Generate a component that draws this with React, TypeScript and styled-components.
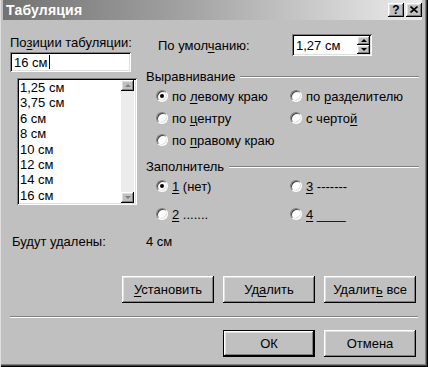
import React from "react";
import styled, { createGlobalStyle, css } from "styled-components";

const Global = createGlobalStyle`
  html, body { margin: 0; padding: 0; background: #c0c0c0; }
  * { box-sizing: border-box; }
  body {
    font-family: "Liberation Sans", Arial, sans-serif;
    font-size: 13px;
    color: #000;
  }
`;

const raised = css`
  background: #c0c0c0;
  box-shadow: inset -1px -1px #000, inset 1px 1px #fff, inset -2px -2px #808080,
    inset 2px 2px #dfdfdf;
`;

const sunken = css`
  background: #fff;
  box-shadow: inset 1px 1px #808080, inset -1px -1px #fff, inset 2px 2px #000,
    inset -2px -2px #dfdfdf;
`;

const Window = styled.div`
  width: 428px;
  height: 367px;
  background: #c0c0c0;
  padding: 0 6px 3px 3px;
  box-shadow: inset 1px 0 #dfdfdf, inset -1px -1px #000, inset -2px -2px #404040,
    inset -3px -3px #808080;
  display: flex;
  flex-direction: column;
`;

const TitleBar = styled.div`
  height: 20px;
  display: flex;
  align-items: center;
  padding: 0 0 0 3px;
  background: linear-gradient(to right, #727272 0%, #a4a4a4 45%, #ececec 100%);
`;

const TitleText = styled.div`
  flex: 1;
  color: #fff;
  font-weight: bold;
  font-size: 14px;
  letter-spacing: 0.2px;
`;

const TitleButtons = styled.div`
  display: flex;
  gap: 2px;
`;

const TitleButton = styled.div`
  ${raised};
  width: 16px;
  height: 14px;
  display: flex;
  align-items: center;
  justify-content: center;
  font-weight: bold;
  font-size: 12px;
  line-height: 1;
  padding-bottom: 1px;
`;

const Body = styled.div`
  display: flex;
  flex-direction: column;
  padding: 13px 3px 0 7px;
`;

const MainGrid = styled.div`
  display: grid;
  grid-template-columns: 136px 1fr;
  row-gap: 9px;
`;

const Column = styled.div`
  display: flex;
  flex-direction: column;
`;

const Label = styled.div<{ $mt?: number; $pl?: number }>`
  line-height: 15px;
  height: 15px;
  white-space: nowrap;
  margin-top: ${(p) => p.$mt ?? 0}px;
  padding-left: ${(p) => p.$pl ?? 0}px;
`;

const U = styled.span`
  text-decoration: underline;
  text-underline-offset: 2px;
`;

const TextInput = styled.div`
  ${sunken};
  margin-top: 2px;
  width: 121px;
  height: 20px;
  display: flex;
  align-items: center;
  padding-left: 4px;
`;

const Caret = styled.span`
  display: inline-block;
  width: 1px;
  height: 14px;
  background: #000;
  margin-left: 1px;
`;

const ListBox = styled.div`
  ${sunken};
  margin: 6px 0 0 7px;
  width: 120px;
  height: 127px;
  display: flex;
  padding: 2px;
`;

const ListItems = styled.div`
  flex: 1;
  overflow: hidden;
  padding-left: 1px;
`;

const ListItem = styled.div`
  height: 15.4px;
  line-height: 15.4px;
  white-space: nowrap;
`;

const ScrollBar = styled.div`
  width: 13px;
  display: flex;
  flex-direction: column;
  background: #ececec;
  margin-right: 1px;
`;

const ScrollTrack = styled.div`
  flex: 1;
`;

const ArrowBtn = styled.div<{ $h: number }>`
  ${raised};
  height: ${(p) => p.$h}px;
  display: flex;
  align-items: center;
  justify-content: center;
`;

const Tri = styled.span<{ $up: boolean; $color: string }>`
  width: 0;
  height: 0;
  border-left: 3px solid transparent;
  border-right: 3px solid transparent;
  ${(p) =>
    p.$up
      ? `border-bottom: 3px solid ${p.$color};`
      : `border-top: 3px solid ${p.$color};`}
`;

const DefaultRow = styled.div`
  display: flex;
  align-items: center;
  height: 22px;
  margin-top: 1px;
`;

const DefaultLabel = styled.div`
  width: 146px;
  padding-left: 12px;
  white-space: nowrap;
`;

const SpinBox = styled.div`
  ${sunken};
  width: 80px;
  height: 22px;
  display: flex;
  align-items: center;
  padding: 2px;
`;

const SpinText = styled.div`
  flex: 1;
  padding-left: 2px;
`;

const SpinButtons = styled.div`
  width: 13px;
  height: 18px;
  display: flex;
  flex-direction: column;
`;

const GroupHeader = styled.div<{ $mt: number }>`
  display: flex;
  align-items: center;
  gap: 5px;
  height: 15px;
  margin-top: ${(p) => p.$mt}px;
`;

const GroupLine = styled.div`
  flex: 1;
  height: 2px;
  border-top: 1px solid #808080;
  border-bottom: 1px solid #fff;
`;

const RadioGrid = styled.div<{ $gap: number }>`
  display: grid;
  grid-template-columns: 134px 1fr;
  grid-auto-rows: 22px;
  row-gap: ${(p) => p.$gap}px;
  padding-left: 10px;
  margin-top: 1px;
`;

const RadioItem = styled.div`
  display: flex;
  align-items: center;
  gap: 4px;
  white-space: nowrap;
`;

const RadioCircle = styled.span<{ $checked?: boolean }>`
  width: 12px;
  height: 12px;
  border-radius: 50%;
  background: #fff;
  border: 1px solid;
  border-color: #808080 #fff #fff #808080;
  box-shadow: inset 1px 1px #404040, inset -1px -1px #dfdfdf;
  display: flex;
  align-items: center;
  justify-content: center;
  &::after {
    content: "";
    width: 4px;
    height: 4px;
    border-radius: 50%;
    background: ${(p) => (p.$checked ? "#000" : "transparent")};
  }
`;

const ButtonRow = styled.div<{ $mt: number }>`
  display: flex;
  justify-content: flex-end;
  gap: 9px;
  padding-right: 3px;
  margin-top: ${(p) => p.$mt}px;
`;

const Button = styled.div<{ $default?: boolean }>`
  ${raised};
  width: 92px;
  height: 27px;
  display: flex;
  align-items: center;
  justify-content: center;
  white-space: nowrap;
  ${(p) =>
    p.$default &&
    css`
      box-shadow: inset 0 0 0 1px #000, inset -2px -2px #000, inset 2px 2px #fff,
        inset -3px -3px #808080, inset 3px 3px #dfdfdf;
    `}
`;

const Separator = styled.div`
  margin-top: 13px;
  margin-right: 1px;
  height: 2px;
  border-top: 1px solid #808080;
  border-bottom: 1px solid #fff;
`;

const Radio = ({ checked, children }: { checked?: boolean; children: React.ReactNode }) => (
  <RadioItem>
    <RadioCircle $checked={checked} />
    <span>{children}</span>
  </RadioItem>
);

const items = ["1,25 см", "3,75 см", "6 см", "8 см", "10 см", "12 см", "14 см", "16 см"];

export default function App() {
  return (
    <>
      <Global />
      <Window>
        <TitleBar>
          <TitleText>Табуляция</TitleText>
          <TitleButtons>
            <TitleButton>?</TitleButton>
            <TitleButton>
              <svg width="8" height="7" viewBox="0 0 8 7">
                <path d="M0.5 0.5 L7.5 6.5 M7.5 0.5 L0.5 6.5" stroke="#000" strokeWidth="1.6" />
              </svg>
            </TitleButton>
          </TitleButtons>
        </TitleBar>
        <Body>
          <MainGrid>
            <Column>
              <Label $mt={2}>
                По<U>з</U>иции табуляции:
              </Label>
              <TextInput>
                16 см<Caret />
              </TextInput>
              <ListBox>
                <ListItems>
                  {items.map((it) => (
                    <ListItem key={it}>{it}</ListItem>
                  ))}
                </ListItems>
                <ScrollBar>
                  <ArrowBtn $h={11}>
                    <Tri $up $color="#808080" />
                  </ArrowBtn>
                  <ScrollTrack />
                  <ArrowBtn $h={11}>
                    <Tri $up={false} $color="#808080" />
                  </ArrowBtn>
                </ScrollBar>
              </ListBox>
            </Column>
            <Column>
              <DefaultRow>
                <DefaultLabel>
                  По умол<U>ч</U>анию:
                </DefaultLabel>
                <SpinBox>
                  <SpinText>1,27 см</SpinText>
                  <SpinButtons>
                    <ArrowBtn $h={9}>
                      <Tri $up $color="#000" />
                    </ArrowBtn>
                    <ArrowBtn $h={9}>
                      <Tri $up={false} $color="#000" />
                    </ArrowBtn>
                  </SpinButtons>
                </SpinBox>
              </DefaultRow>
              <GroupHeader $mt={13}>
                <span>Выравнивание</span>
                <GroupLine />
              </GroupHeader>
              <RadioGrid $gap={0}>
                <Radio checked>
                  по <U>л</U>евому краю
                </Radio>
                <Radio>
                  по <U>р</U>азделителю
                </Radio>
                <Radio>
                  по <U>ц</U>ентру
                </Radio>
                <Radio>
                  с черто<U>й</U>
                </Radio>
                <Radio>
                  по <U>п</U>равому краю
                </Radio>
              </RadioGrid>
              <GroupHeader $mt={8}>
                <span>Заполнитель</span>
                <GroupLine />
              </GroupHeader>
              <RadioGrid $gap={6}>
                <Radio checked>
                  <U>1</U> (нет)
                </Radio>
                <Radio>
                  <U>3</U> -------
                </Radio>
                <Radio>
                  <U>2</U> .......
                </Radio>
                <Radio>
                  <U>4</U> ____
                </Radio>
              </RadioGrid>
            </Column>
            <Label $pl={2}>Будут удалены:</Label>
            <Label>4 см</Label>
          </MainGrid>
          <ButtonRow $mt={27}>
            <Button>
              <span>
                <U>У</U>становить
              </span>
            </Button>
            <Button>
              <span>
                Уд<U>а</U>лить
              </span>
            </Button>
            <Button>
              <span>
                Удалит<U>ь</U> все
              </span>
            </Button>
          </ButtonRow>
          <Separator />
          <ButtonRow $mt={12}>
            <Button $default>ОК</Button>
            <Button>Отмена</Button>
          </ButtonRow>
        </Body>
      </Window>
    </>
  );
}
